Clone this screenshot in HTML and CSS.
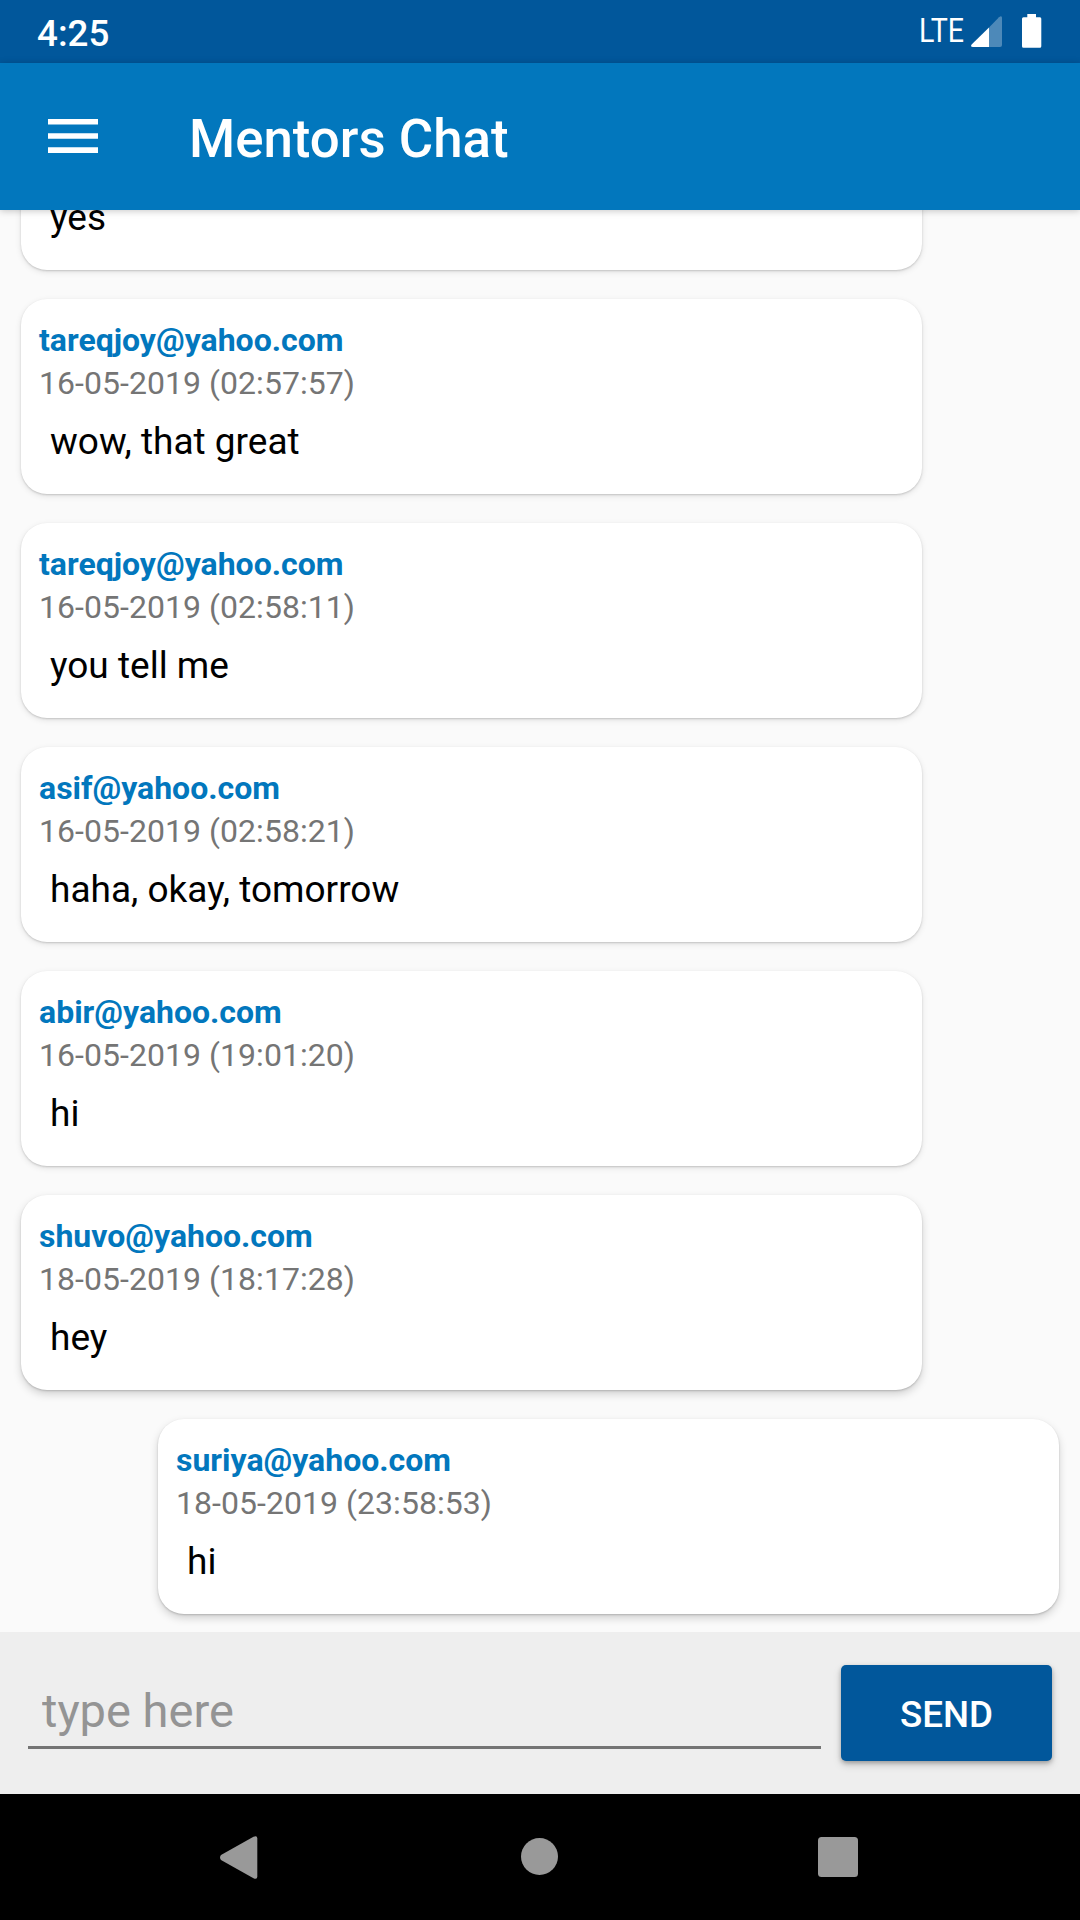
FILE: index.html
```html
<!DOCTYPE html>
<html lang="en">
<head>
<meta charset="utf-8">
<title>Mentors Chat</title>
<link rel="stylesheet" href="styles.css">
</head>
<body>
<div class="screen">
  <div class="status-bar">
    <span class="clock">4:25</span>
    <div class="status-icons">
      <span class="network">LTE</span>
      <svg class="signal" width="31" height="31" viewBox="0 0 31 31"><path d="M18 11.5 28 1.2Q31-1 31 2V29Q31 31 29 31H18Z" fill="#fff" fill-opacity=".3"/><path d="M18 11.5V31H2Q-1 31 .6 28.6Z" fill="#fff"/></svg>
      <svg class="battery" width="20" height="34" viewBox="0 0 20 34"><path d="M5.3 0H14V3.3H18Q19.3 3.3 19.3 4.8V32.2Q19.3 33.7 17.8 33.7H1.5Q0 33.7 0 32.2V4.8Q0 3.3 1.5 3.3H5.3Z" fill="#fff"/></svg>
    </div>
  </div>
  <header class="app-bar">
    <svg class="menu" width="50" height="34" viewBox="0 0 50 34"><path d="M0 0H50V5.5H0ZM0 14.2H50V19.7H0ZM0 28.2H50V34H0Z" fill="#fff"/></svg>
    <h1 class="title">Mentors Chat</h1>
  </header>
  <main class="messages">
    <article class="card"><p class="text">yes</p></article>
    <article class="card"><div class="sender">tareqjoy@yahoo.com</div><time class="date">16-05-2019 (02:57:57)</time><p class="text">wow, that great</p></article>
    <article class="card"><div class="sender">tareqjoy@yahoo.com</div><time class="date">16-05-2019 (02:58:11)</time><p class="text">you tell me</p></article>
    <article class="card"><div class="sender">asif@yahoo.com</div><time class="date">16-05-2019 (02:58:21)</time><p class="text">haha, okay, tomorrow</p></article>
    <article class="card"><div class="sender">abir@yahoo.com</div><time class="date">16-05-2019 (19:01:20)</time><p class="text">hi</p></article>
    <article class="card card-low"><div class="sender">shuvo@yahoo.com</div><time class="date">18-05-2019 (18:17:28)</time><p class="text">hey</p></article>
    <article class="card card-low card-own"><div class="sender">suriya@yahoo.com</div><time class="date">18-05-2019 (23:58:53)</time><p class="text">hi</p></article>
  </main>
  <form class="composer">
    <input class="field" type="text" placeholder="type here">
    <button class="send" type="button">SEND</button>
  </form>
  <nav class="nav-bar">
    <svg width="38" height="43" viewBox="0 0 38 43"><path d="M1 19 33.5.8Q37.3-.8 37.3 2.5V40.5Q37.3 43.8 33.5 42.2L1 24Q-1 21.5 1 19Z" fill="#999"/></svg>
    <svg class="home" width="37" height="37" viewBox="0 0 37 37"><circle cx="18.5" cy="18.5" r="18.5" fill="#999"/></svg>
    <svg width="40" height="40" viewBox="0 0 40 40"><rect width="40" height="40" rx="3.5" fill="#999"/></svg>
  </nav>
</div>
</body>
</html>
```
FILE: styles.css
```css
* { box-sizing: border-box; }
body { margin: 0; font-family: Roboto, sans-serif; }
.screen { display: flex; flex-direction: column; width: 1080px; height: 1920px; overflow: hidden; background: #fafafa; }
.status-bar { display: flex; justify-content: space-between; flex: none; height: 63px; padding: 0 38px 0 37px; background: #01579b; color: #fff; }
.clock { font-size: 36.75px; font-weight: 500; line-height: 67px; }
.status-icons { display: flex; align-items: flex-start; }
.network { font-size: 32.5px; line-height: 62px; transform: scaleX(.88); transform-origin: right; margin-right: 7px; }
.signal { margin-top: 16px; margin-right: 20px; }
.battery { margin-top: 14px; }
.app-bar { display: flex; flex: none; align-items: center; height: 147px; padding-left: 48px; background: #0277bd; color: #fff; position: relative; z-index: 1; box-shadow: 0 1px 7px rgba(0,0,0,.22); }
.menu { margin: 0 91px 2px 0; }
.title { margin: 5px 0 0; font-size: 52.8px; font-weight: 500; line-height: 62px; }
.messages { display: flex; flex: 1; flex-direction: column; justify-content: flex-end; gap: 29px; min-height: 0; padding: 0 21px 18px; overflow: hidden; }
.card { display: flex; flex: none; flex-direction: column; justify-content: flex-end; width: 901px; height: 195px; padding: 0 18px 28px; border-radius: 26px; background: #fff; box-shadow: 0 1px 2px rgba(0,0,0,.16), 0 2px 6px rgba(0,0,0,.1); }
.card-low { box-shadow: 0 1px 2px rgba(0,0,0,.18), 0 4px 8px rgba(0,0,0,.17); }
.card-own { align-self: flex-end; }
.sender, .date { font-size: 32px; line-height: 43px; }
.sender { color: #0277bd; font-weight: 700; }
.date { color: #757575; letter-spacing: .05px; }
.text { margin: 12px 0 0 11px; color: #000; font-size: 37px; line-height: 49px; }
.composer { display: flex; flex: none; height: 162px; padding: 33px 28px; gap: 20px; background: #eee; }
.field { flex: 1; min-width: 0; height: 84px; padding: 10px 14px 0; border: 0; border-bottom: 3px solid #747474; outline: 0; background: none; font: 47px Roboto, sans-serif; }
.field::placeholder { color: #949494; opacity: 1; }
.send { width: 211px; height: 96px; border: 0; border-radius: 5px; padding: 2px 0 0; background: #01579b; color: #fff; font: 500 36.75px Roboto, sans-serif; box-shadow: 0 2px 4px rgba(0,0,0,.25), 0 4px 9px rgba(0,0,0,.15); }
.nav-bar { display: flex; flex: none; align-items: center; justify-content: space-between; height: 126px; padding: 0 222px 0 220px; background: #000; }
.home { margin: 0 0 1px 2px; }
```
